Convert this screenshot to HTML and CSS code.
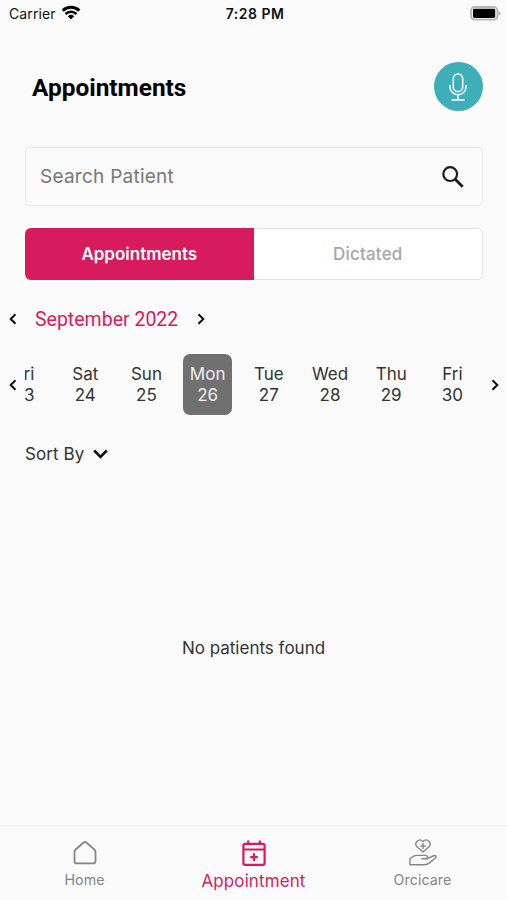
FILE: index.html
```html
<!DOCTYPE html>
<html lang="en">
<head>
    <meta charset="UTF-8">
    <meta name="viewport" content="width=device-width, initial-scale=1.0">
    <title>Appointments</title>
    <link rel="stylesheet" href="styles.css">
</head>
<body>
    <div class="status-bar">
        <div class="carrier">
            <span>Carrier</span>
            <svg width="20" height="15" viewBox="0 0 20 15">
                <path d="M1.7 5.6a12 12 0 0 1 16.6 0" fill="none" stroke="#000" stroke-width="3"/>
                <path d="M4.5 9a7.9 7.9 0 0 1 11 0" fill="none" stroke="#000" stroke-width="2.5"/>
                <path d="M6.9 11.2a4.5 4.5 0 0 1 6.2 0L10 14.4z"/>
            </svg>
        </div>
        <div class="time">7:28 PM</div>
        <div class="battery">
            <svg width="31" height="15" viewBox="0 0 31 15">
                <rect x="1" y="1" width="26.4" height="12.6" rx="3.6" fill="#fafafa" stroke="#b5b5b5" stroke-width="1.8"/>
                <rect x="3" y="2.8" width="22.2" height="9.2" rx="1.4"/>
                <path d="M28.4 4.9c3 1 3 3.9 0 4.9z" fill="#b5b5b5"/>
            </svg>
        </div>
    </div>

    <header class="header">
        <h1>Appointments</h1>
        <button class="mic">
            <svg width="18" height="28" viewBox="0 0 18 28" fill="none" stroke="#fff" stroke-width="1.5" stroke-linecap="round">
                <rect x="4.3" y="1" width="9.4" height="17.6" rx="4.7"/>
                <path d="M1 12.5v1.5a8 7.8 0 0 0 16 0v-1.5M9 21.8v5M3 27h12"/>
            </svg>
        </button>
    </header>

    <div class="search">
        <span>Search Patient</span>
        <svg width="22" height="22" viewBox="0 0 22 22" fill="none" stroke="#1c1c1c">
            <circle cx="8.2" cy="8.1" r="6.9" stroke-width="2.2"/>
            <path d="M13.2 13.2l7.5 7.6" stroke-width="2.8"/>
        </svg>
    </div>

    <div class="tabs">
        <div class="tab active">Appointments</div>
        <div class="tab">Dictated</div>
    </div>

    <div class="month">
        <svg class="arrow" width="8" height="12" viewBox="0 0 8 12"><path d="M6.5 1.3L1.7 6l4.8 4.700"/></svg>
        <span>September 2022</span>
        <svg class="arrow" width="8" height="12" viewBox="0 0 8 12"><path d="M1.5 1.3L6.3 6l-4.8 4.700"/></svg>
    </div>

    <div class="week">
        <svg class="arrow" width="8" height="12" viewBox="0 0 8 12"><path d="M6.5 1.3L1.7 6l4.8 4.700"/></svg>
        <div class="days">
            <div class="day">Fri<br>23</div>
            <div class="day">Sat<br>24</div>
            <div class="day">Sun<br>25</div>
            <div class="day selected">Mon<br>26</div>
            <div class="day">Tue<br>27</div>
            <div class="day">Wed<br>28</div>
            <div class="day">Thu<br>29</div>
            <div class="day">Fri<br>30</div>
        </div>
        <svg class="arrow" width="8" height="12" viewBox="0 0 8 12"><path d="M1.5 1.3L6.3 6l-4.8 4.700"/></svg>
    </div>

    <div class="sort">
        <span>Sort By</span>
        <svg width="15" height="10" viewBox="0 0 15 10"><path d="M1.2 1.5l6.3 6.3 6.3-6.3" fill="none" stroke="#111" stroke-width="2.6"/></svg>
    </div>

    <main class="empty">No patients found</main>

    <nav class="nav">
        <div class="nav-item">
            <svg width="26" height="26" viewBox="0 0 26 26" fill="none" stroke="#858585" stroke-width="1.8" stroke-linejoin="round">
                <path d="M2.500 12q0-1.500 1.100-2.500L11.700 2.500q1.300-1 2.600 0l8.100 7q1.100 1 1.100 2.500V21.200a2.200 2.200 0 0 1-2.200 2.200H4.700a2.200 2.200 0 0 1-2.200-2.200z"/>
            </svg>
            <span>Home</span>
        </div>
        <div class="nav-item active">
            <svg width="26" height="28" viewBox="0 0 26 28" fill="none" stroke="#d81b5d" stroke-width="2.2">
                <rect x="2.4" y="3.9" width="21.2" height="21" rx="1.8"/>
                <path d="M2.5 9.5h21M7.2 4V.5M18.8 4V.5M13 13.3v7.6M9.2 17.1h7.6"/>
            </svg>
            <span>Appointment</span>
        </div>
        <div class="nav-item">
            <svg width="28" height="28" viewBox="0 0 28 28" fill="none" stroke="#858585" stroke-width="1.4" stroke-linecap="round" stroke-linejoin="round">
                <path d="M14 14L8 8.7C4.500 5 9.800-.7 14 3.500c4.200-4.200 9.500 1.500 6 5.200zM14 5.600v5M11.500 8.100h5"/>
                <path d="M1 26.700v-6.200l3.700-2.300q1.400-.8 3-.8h8.600q2 0 2 1.700v1.500l5.700-2.600c2.600-1.200 4.100.6 2.200 2.200l-5.700 4.700Q18.200 26.700 15.500 26.700zM18.300 20.700h-5.500"/>
            </svg>
            <span>Orcicare</span>
        </div>
    </nav>
</body>
</html>
```
FILE: styles.css
```css
* {
    box-sizing: border-box;
}
body {
    margin: 0;
    height: 900px;
    display: flex;
    flex-direction: column;
    background: #fafafa;
    color: #333;
    font-family: Inter, "Liberation Sans", sans-serif;
    overflow: hidden;
}
.status-bar {
    display: grid;
    grid-template-columns: 1fr auto 1fr;
    align-items: center;
    height: 27px;
    padding: 0 6px 0 9px;
    font-size: 14px;
    color: #111;
}
.carrier {
    display: flex;
    align-items: center;
    gap: 5px;
    letter-spacing: 0.1px;
}
.carrier svg {
    margin-bottom: 2px;
}
.time {
    font-weight: 600;
    letter-spacing: 0.5px;
}
.battery {
    display: flex;
    justify-content: flex-end;
}
.header {
    display: flex;
    justify-content: space-between;
    align-items: center;
    height: 49px;
    margin: 35px 24px 0 32px;
}
h1 {
    margin: 2px 0 0;
    font-family: Roboto, sans-serif;
    font-size: 24.4px;
    font-weight: 700;
    color: #000;
}
.mic {
    display: flex;
    align-items: center;
    justify-content: center;
    width: 49px;
    height: 49px;
    padding: 0 1px 0 0;
    border: none;
    border-radius: 50%;
    background: #3eafb9;
}
.search {
    display: flex;
    justify-content: space-between;
    align-items: center;
    height: 59px;
    margin: 36px 24px 0 25px;
    padding: 0 18px 0 14px;
    border: 1px solid #e9e9e9;
    border-radius: 4px;
    font-size: 19px;
    letter-spacing: 0.25px;
    color: #777;
}
.tabs {
    display: flex;
    height: 52px;
    margin: 22px 24px 0 25px;
    border: 1px solid #e3e3e3;
    border-radius: 6px;
    background: #fff;
}
.tab {
    flex: 1;
    display: flex;
    align-items: center;
    justify-content: center;
    font-size: 17px;
    font-weight: 500;
    letter-spacing: 0.2px;
    color: #a6a6a6;
}
.tab.active {
    margin: -1px 0 -1px -1px;
    border-radius: 6px 0 0 6px;
    background: #d81b5d;
    color: #fff;
    font-weight: 600;
    letter-spacing: 0;
}
.arrow {
    flex: none;
    fill: none;
    stroke: #111;
    stroke-width: 2;
}
.month {
    display: flex;
    align-items: center;
    gap: 18px;
    height: 30px;
    margin-top: 24px;
    padding-left: 9px;
    font-family: Roboto, sans-serif;
    font-size: 19.5px;
    color: #d81b5d;
}
.month span {
    margin-right: 1px;
}
.week {
    display: flex;
    align-items: center;
    justify-content: space-between;
    height: 61px;
    margin-top: 20px;
    padding: 0 8px 0 9px;
}
.days {
    display: flex;
    justify-content: flex-end;
    width: 458px;
    height: 61px;
    overflow: hidden;
}
.day {
    flex: none;
    width: 49px;
    margin: 0 6.1px;
    padding-top: 10px;
    border-radius: 7px;
    text-align: center;
    font-size: 17px;
    line-height: 21px;
}
.day.selected {
    background: #707070;
    color: #eee;
}
.sort {
    display: flex;
    align-items: center;
    gap: 8px;
    height: 24px;
    margin: 27px 0 0 25px;
    font-size: 17px;
    letter-spacing: 0.1px;
}
.empty {
    flex: 1;
    display: flex;
    align-items: center;
    justify-content: center;
    padding-top: 4px;
    font-size: 17px;
}
.nav {
    display: grid;
    grid-template-columns: repeat(3, 1fr);
    height: 75px;
    border-top: 2px solid #f3f3f3;
}
.nav-item {
    display: flex;
    flex-direction: column;
    align-items: center;
    justify-content: flex-end;
    gap: 3px;
    padding-bottom: 9px;
    font-size: 14.2px;
    line-height: 22px;
    letter-spacing: 0.1px;
    color: #858585;
}
.nav-item.active {
    gap: 2px;
    padding-bottom: 8px;
    font-size: 17px;
    color: #d81b5d;
}
```
